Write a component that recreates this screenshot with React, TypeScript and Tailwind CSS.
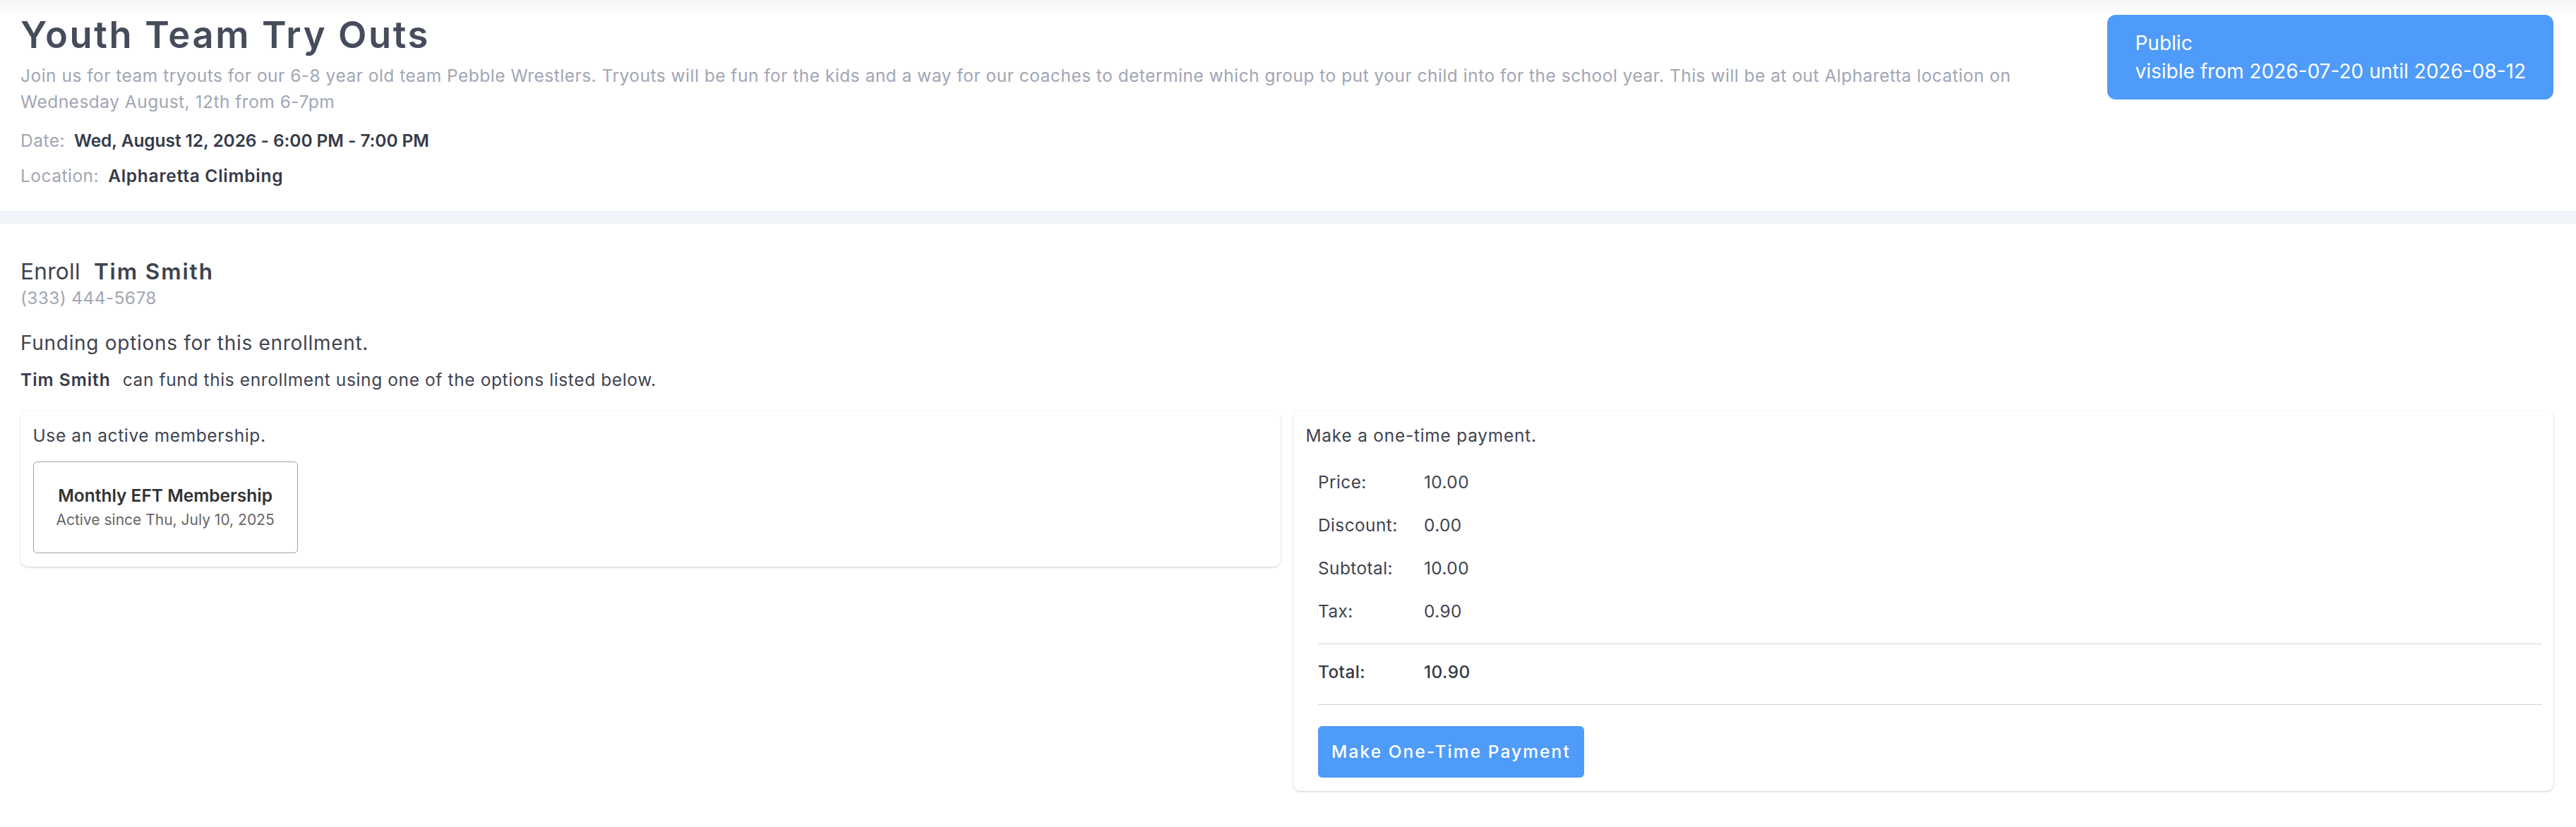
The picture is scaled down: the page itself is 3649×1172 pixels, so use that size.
import React from "react";

const event = {
  title: "Youth Team Try Outs",
  description:
    "Join us for team tryouts for our 6-8 year old team Pebble Wrestlers. Tryouts will be fun for the kids and a way for our coaches to determine which group to put your child into for the school year. This will be at out Alpharetta location on Wednesday August, 12th from 6-7pm",
  date: "Wed, August 12, 2026 - 6:00 PM - 7:00 PM",
  location: "Alpharetta Climbing",
  visibleFrom: "2026-07-20",
  visibleUntil: "2026-08-12",
};

const member = { name: "Tim Smith", phone: "(333) 444-5678" };

const charges = [
  { label: "Price:", value: "10.00" },
  { label: "Discount:", value: "0.00" },
  { label: "Subtotal:", value: "10.00" },
  { label: "Tax:", value: "0.90" },
];

function EventHeader() {
  return (
    <header className="flex items-start gap-[36px] bg-[linear-gradient(to_bottom,#f6f6f7,#ffffff_24px)] pb-[31px] pl-[29px] pr-[32px] pt-[18px]">
      <div className="min-w-0 flex-1">
        <h1 className="text-[52.5px] font-semibold leading-[63px] tracking-[0.05em] text-[#464c5b]">{event.title}</h1>
        <p className="mt-[8px] text-[24.5px] leading-[37px] tracking-[0.02em] text-[#a2a5b5]">{event.description}</p>
        <div className="mt-[18px] flex gap-[13px] text-[24.5px] leading-[37px]">
          <span className="tracking-[0.02em] text-[#a2a5b5]">Date:</span>
          <span className="font-semibold tracking-[-0.003em] text-[#363b48]">{event.date}</span>
        </div>
        <div className="mt-[13px] flex gap-[13px] text-[24.5px] leading-[37px]">
          <span className="tracking-[0.02em] text-[#a2a5b5]">Location:</span>
          <span className="font-semibold tracking-[0.03em] text-[#363b48]">{event.location}</span>
        </div>
      </div>
      <div className="mt-[3px] shrink-0 rounded-[12px] bg-[#4f9bfa] px-[39px] py-[20px] text-[28px] leading-[40px] text-white">
        <div>Public</div>
        <div>
          visible from {event.visibleFrom} until {event.visibleUntil}
        </div>
      </div>
    </header>
  );
}

function MembershipCard() {
  return (
    <div className="rounded-[10px] bg-white p-[17.5px] pb-[19px] shadow-[0_1px_3px_rgba(0,0,0,0.2)]">
      <p className="text-[24.5px] leading-[35px] tracking-[0.025em] text-[#3f4451]">Use an active membership.</p>
      <button
        type="button"
        className="mt-[19.5px] block rounded-[6px] border border-[#a3a3a3] bg-white px-[32px] py-[30px] text-center"
      >
        <div className="text-[24.5px] font-semibold leading-[35px] text-[#333333]">Monthly EFT Membership</div>
        <div className="text-[21px] leading-[33px] text-[#666666]">Active since Thu, July 10, 2025</div>
      </button>
    </div>
  );
}

function PaymentCard() {
  return (
    <div className="rounded-[10px] bg-white p-[17.5px] pb-[18.5px] shadow-[0_1px_3px_rgba(0,0,0,0.2)]">
      <p className="text-[24.5px] leading-[35px] tracking-[0.03em] text-[#3f4451]">Make a one-time payment.</p>
      <div className="ml-[17.5px] mt-[18px] text-[24.5px] leading-[35px] tracking-[0.015em] text-[#3f4451]">
        {charges.map((row) => (
          <div key={row.label} className="flex py-[13px]">
            <span className="w-[150px]">{row.label}</span>
            <span>{row.value}</span>
          </div>
        ))}
        <div className="mt-[15px] border-t border-[#d4d4d8]" />
        <div className="mt-[9.5px] flex py-[13px] font-medium text-[#363b48]">
          <span className="w-[150px]">Total:</span>
          <span>10.90</span>
        </div>
        <div className="mt-[15px] border-t border-[#d4d4d8]" />
        <button
          type="button"
          className="mt-[30px] rounded-[6px] bg-[#4f9bfa] px-[19px] py-[19px] text-[24.5px] font-medium leading-[35px] tracking-[0.085em] text-white"
        >
          Make One-Time Payment
        </button>
      </div>
    </div>
  );
}

export default function App() {
  return (
    <div className="min-h-screen bg-white font-['Inter',sans-serif]">
      <EventHeader />
      <div className="h-[18px] bg-[#f1f5f9]" />
      <section className="pb-[40px] pl-[29px] pr-[32px] pt-[47.5px]">
        <div className="flex items-baseline gap-[19px] text-[31.5px] leading-[40px] text-[#3e4350]">
          <span className="tracking-[0.01em]">Enroll</span>
          <span className="font-semibold tracking-[0.06em]">{member.name}</span>
        </div>
        <div className="text-[24.5px] leading-[35px] tracking-[0.015em] text-[#a2a5b5]">{member.phone}</div>
        <p className="mt-[25px] text-[28px] leading-[42px] tracking-[0.025em] text-[#3f4451]">
          Funding options for this enrollment.
        </p>
        <p className="mt-[14px] flex gap-[17px] text-[24.5px] leading-[35px] text-[#3f4451]">
          <span className="font-semibold tracking-[0.04em] text-[#363b48]">{member.name}</span>
          <span className="tracking-[0.025em]">can fund this enrollment using one of the options listed below.</span>
        </p>
        <div className="mt-[26.5px] grid grid-cols-2 items-start gap-[18px]">
          <MembershipCard />
          <PaymentCard />
        </div>
      </section>
    </div>
  );
}
